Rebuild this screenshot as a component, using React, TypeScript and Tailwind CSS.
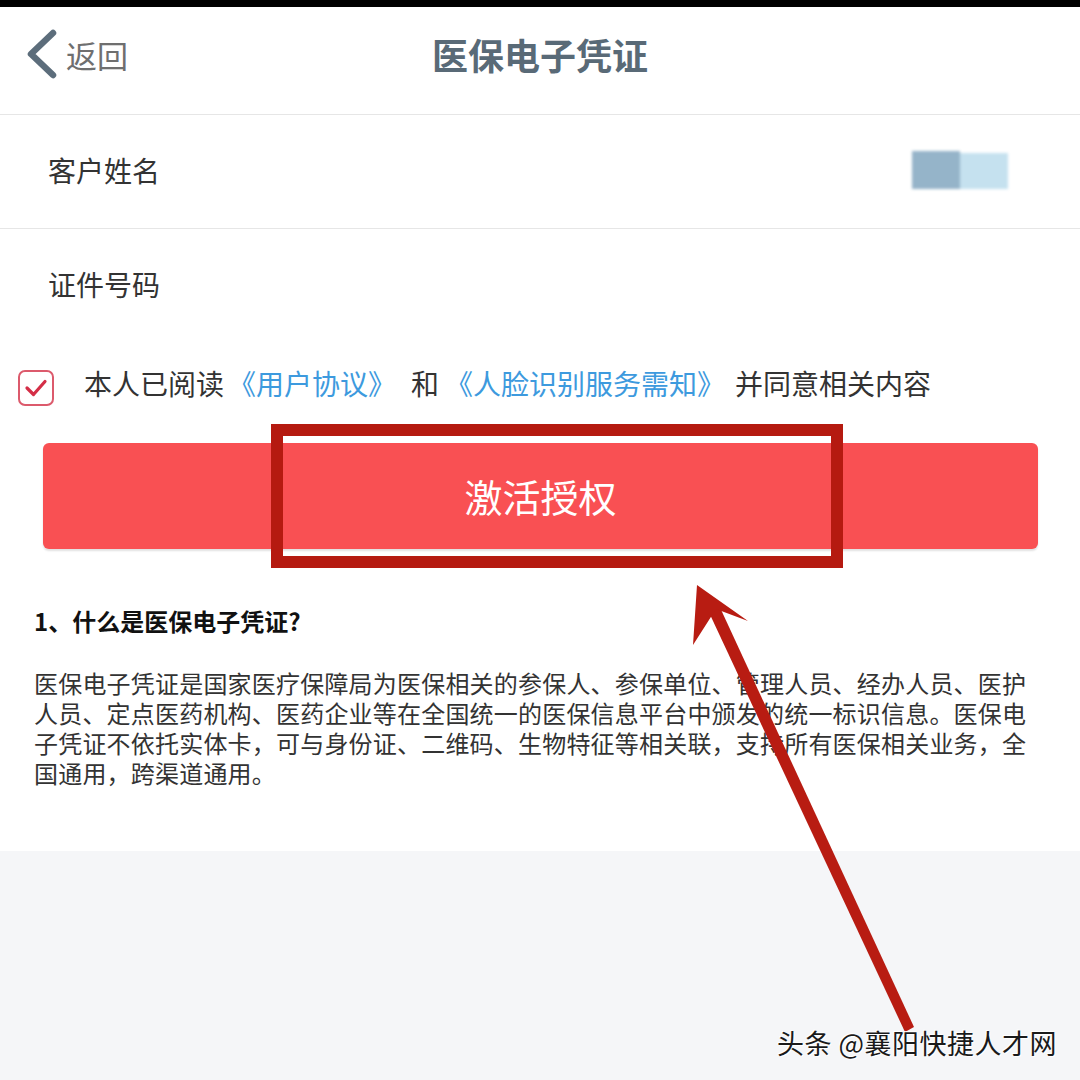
import React from "react";

const cjk = { fontFamily: '"Noto Sans CJK SC", "Noto Sans", sans-serif' };

function Header() {
  return (
    <header className="h-[108px] pb-[13px] grid grid-cols-[1fr_auto_1fr] items-center border-b border-[#e6e6e6]">
      <div className="flex items-center pl-[22px] gap-[8px]">
        <svg width="36" height="52" viewBox="0 0 36 52" fill="none">
          <path d="M31 5 L9 26 L31 47" stroke="#5c6d7b" strokeWidth={6.5} strokeLinecap="round" strokeLinejoin="round" />
        </svg>
        <span className="text-[31px] text-[#6f6f6f] leading-none">返回</span>
      </div>
      <h1 className="text-[36px] font-bold text-[#596a77] leading-none">医保电子凭证</h1>
      <div />
    </header>
  );
}

function Checkbox() {
  return (
    <div className="w-[36px] h-[36px] shrink-0 rounded-[7px] border-2 border-[#dc5a6c] flex items-center justify-center">
      <svg width="24" height="20" viewBox="0 0 24 20" fill="none">
        <path d="M3 10 L9.5 16.5 L21 3.5" stroke="#d42e47" strokeWidth={3.2} strokeLinecap="round" strokeLinejoin="round" />
      </svg>
    </div>
  );
}

function Overlay() {
  return (
    <svg className="absolute inset-0 pointer-events-none" width="1080" height="1080" viewBox="0 0 1080 1080">
      <rect x="277" y="430" width="560" height="132" fill="none" stroke="#b51a10" strokeWidth={12} />
      <polygon points="706,606 717,601 914,1027 905,1032" fill="#b81c12" />
      <polygon points="697,585 748,621 716,609 693,645" fill="#b81c12" />
    </svg>
  );
}

export default function App() {
  return (
    <div className="w-[1080px] h-[1080px] bg-white relative overflow-hidden flex flex-col" style={cjk}>
      <div className="h-[7px] bg-black shrink-0" />
      <Header />

      <div className="h-[114px] pb-[3px] flex items-center justify-between pl-[48px] pr-[72px] border-b border-[#e6e6e6]">
        <span className="text-[28px] text-[#333]">客户姓名</span>
        <div className="flex blur-[1.5px]">
          <div className="w-[48px] h-[38px] bg-[#95b4c9]" />
          <div className="w-[48px] h-[36px] mt-[2px] bg-[#c5e1ef]" />
        </div>
      </div>

      <div className="h-[112px] pb-[2px] flex items-center pl-[48px]">
        <span className="text-[28px] text-[#333]">证件号码</span>
      </div>

      <div className="mt-[22px] h-[40px] flex items-center pl-[18px]">
        <div className="mt-[10px]"><Checkbox /></div>
        <p className="ml-[30px] flex text-[28px] text-[#333] leading-none whitespace-nowrap">
          <span>本人已阅读</span>
          <span className="ml-[4px] text-[#3d9ade]">《用户协议》</span>
          <span className="ml-[15px]">和</span>
          <span className="ml-[6px] text-[#3d9ade]">《人脸识别服务需知》</span>
          <span className="ml-[10px]">并同意相关内容</span>
        </p>
      </div>

      <div className="mt-[40px] ml-[43px] mr-[42px] h-[106px] rounded-[6px] bg-[#f95053] shadow-[0_2px_2px_rgba(0,0,0,0.12)] flex items-center justify-center">
        <span className="text-[38px] text-white leading-none">激活授权</span>
      </div>

      <div className="px-[34px]">
        <h2 className="mt-[57px] text-[24px] font-bold text-[#111] leading-[30px]">1、什么是医保电子凭证?</h2>
        <p className="mt-[32px] w-[996px] text-[24px] tracking-[0.2px] text-[#333] leading-[30px]">
          医保电子凭证是国家医疗保障局为医保相关的参保人、参保单位、管理人员、经办人员、医护人员、定点医药机构、医药企业等在全国统一的医保信息平台中颁发的统一标识信息。医保电子凭证不依托实体卡，可与身份证、二维码、生物特征等相关联，支持所有医保相关业务，全国通用，跨渠道通用。
        </p>
      </div>

      <div className="h-[63px] shrink-0" />
      <div className="flex-1 bg-[#f5f6f8]" />

      <Overlay />

      <div className="absolute left-[777px] top-[1024px] text-[27px] tracking-[0.5px] text-[#1a1a1a] leading-[38px] [text-shadow:1px_1px_0_#fff,-1px_-1px_0_#fff]">
        头条 @襄阳快捷人才网
      </div>
    </div>
  );
}
